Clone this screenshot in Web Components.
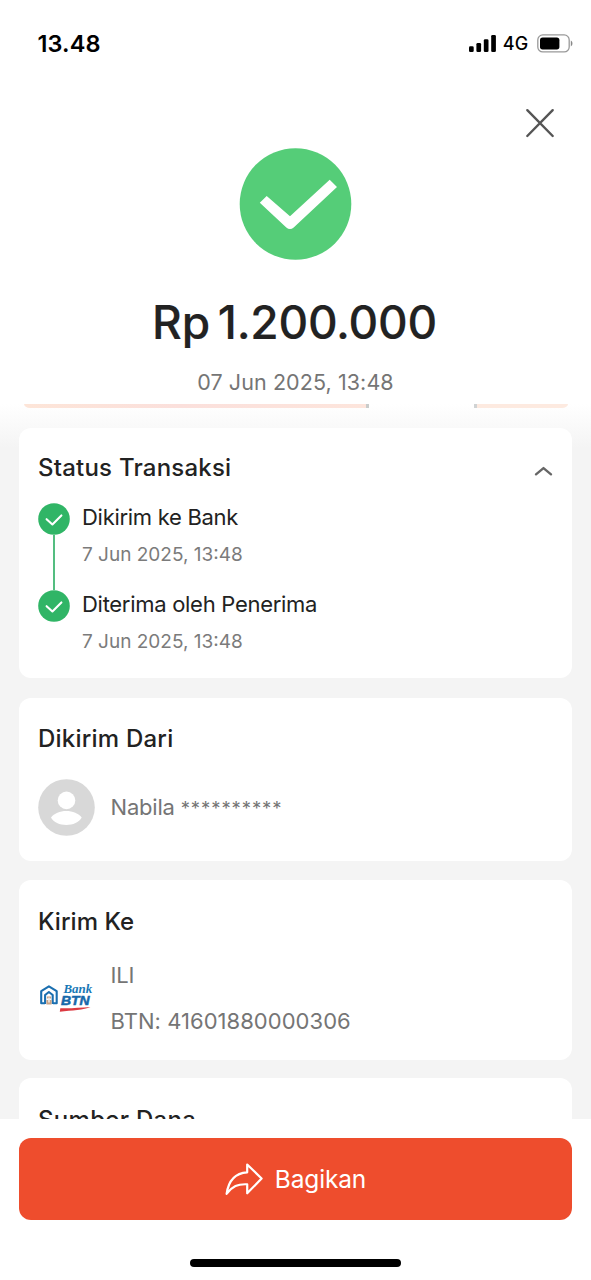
<!DOCTYPE html>
<html lang="id">
<head>
<meta charset="utf-8">
<title>Status Transaksi</title>
<style>
html,body{margin:0;padding:0;background:#fff}
body{width:591px;height:1280px;overflow:hidden;font-family:Inter,"Liberation Sans",sans-serif;color:#222}
</style>
</head>
<body>
<transfer-receipt></transfer-receipt>
<script>
const define = (name, css, html) => customElements.define(name, class extends HTMLElement {
  constructor() {
    super();
    const t = document.createElement('template');
    t.innerHTML = `<style>*{box-sizing:border-box}svg{display:block;flex:none}${css}</style>${html}`;
    this.attachShadow({ mode: 'open' }).append(t.content.cloneNode(true));
  }
});

define('status-bar', `
:host{display:flex;height:87px;padding:0 18px 0 37.5px;align-items:center;justify-content:space-between;color:#000}
.time{font-size:23.5px;font-weight:600;letter-spacing:.1px}
.right{display:flex;align-items:center}
.net{font-size:18px;font-weight:500;letter-spacing:.3px;line-height:20px;margin:1px 8.5px 0 7px}`, `
<span class="time">13.48</span>
<div class="right">
<svg width="27" height="17" viewBox="0 0 27 17"><rect y="11.3" width="4.7" height="5.7" rx="1.3"/><rect x="7.4" y="8" width="4.7" height="9" rx="1.3"/><rect x="14.8" y="4.3" width="4.7" height="12.7" rx="1.3"/><rect x="22.2" width="4.7" height="17" rx="1.3"/></svg>
<span class="net">4G</span>
<svg width="36" height="19" viewBox="0 0 36 19"><rect x=".8" y=".9" width="31.4" height="17" rx="5" fill="none" stroke="#999" stroke-width="1.3"/><rect x="3" y="3.6" width="19.4" height="11.8" rx="2.6"/><path d="M33.8 6.6c2.2.8 2.2 5 0 5.8z" fill="#888"/></svg>
</div>`);

define('receipt-header', `
:host{display:flex;flex-direction:column;height:317px;align-items:center}
.bar{height:61px;align-self:stretch;display:flex;justify-content:flex-end;padding:21px 36px 0 0}
.amount{margin-top:32px;margin-right:2px;font-size:46px;font-weight:500;line-height:60px;letter-spacing:-.25px;word-spacing:-4px;-webkit-text-stroke:.2px #222}
.date{margin-top:15px;font-size:21.5px;line-height:30px;letter-spacing:.08px;color:#757575}`, `
<div class="bar"><svg width="30" height="30" viewBox="0 0 30 30"><path d="M2.3 2.2 27.7 28M27.7 2.2 2.3 28" stroke="#555" stroke-width="2.4" stroke-linecap="round"/></svg></div>
<svg width="113" height="112" viewBox="0 0 113 112"><circle cx="56.5" cy="56" r="55.8" fill="#55cd78"/><path d="M20.8 54.8 27.7 48 51 68.3 90.7 31.700 98 39 54.700 79.500Q51 82.500 47.300 79.500Z" fill="#fff"/></svg>
<div class="amount">Rp 1.200.000</div>
<div class="date">07 Jun 2025, 13:48</div>`);

define('promo-edge', `
:host{display:flex;height:4px;margin:0 4px 0 5px;justify-content:space-between}
i{display:block;height:4px}
.a{width:345px;background:linear-gradient(90deg,#fde5d8,#fbe0dc 45%,#fde5dc);border-bottom-left-radius:6px 4px;border-right:3px solid #c9cccb}
.b{width:94px;background:#fdeae0;border-bottom-right-radius:6px 4px;border-left:3px solid #d0d3d4}`, `<i class="a"></i><i class="b"></i>`);

define('info-card', `
:host{display:block;background:#fff;border-radius:12px;padding:0 19px;flex:none}
.head{display:flex;justify-content:space-between;align-items:center;font-size:24px;font-weight:450;line-height:30px;letter-spacing:var(--title-spacing,.22px);height:30px}`, `
<div class="head"><slot name="title"></slot><slot name="action"></slot></div><slot></slot>`);

define('chevron-up', `:host{display:block;margin-top:5px}`, `
<svg width="19" height="12" viewBox="0 0 19 12"><path d="m2 9.300 7.500-6.200 7.500 6.200" fill="none" stroke="#666" stroke-width="2.4" stroke-linecap="round" stroke-linejoin="round"/></svg>`);

define('status-step', `
:host{display:flex;height:87px}
.rail{width:32px;display:flex;flex-direction:column;align-items:center}
.line{width:2px;flex:1;background:var(--line,#54bd80)}
.text{margin-left:12px}
.name{font-size:22px;line-height:28px;letter-spacing:-.29px}
.when{margin-top:10px;font-size:19px;line-height:28px;color:#7b7b7b}`, `
<div class="rail"><svg width="32" height="32" viewBox="0 0 32 32"><circle cx="16" cy="16" r="15.8" fill="#30b566"/><path d="m8.6 16.2 5.8 5.3 9-9.1" fill="none" stroke="#fff" stroke-width="2.1" stroke-linecap="round" stroke-linejoin="round"/></svg><div class="line"></div></div>
<div class="text"><div class="name"><slot></slot></div><div class="when"><slot name="when"></slot></div></div>`);

define('user-avatar', `:host{display:block;flex:none}`, `
<svg width="57" height="57" viewBox="0 0 57 57"><circle cx="28.5" cy="28.5" r="28.3" fill="#d8d8d8"/><circle cx="28.5" cy="21.4" r="8.8" fill="#fff"/><path d="M13 38.5C16 34.4 22 32 28.3 32s12.400 2.400 15.400 6.500C41 43.300 35 46 28.300 46S15.500 43.300 13 38.500Z" fill="#fff"/></svg>`);

define('bank-logo', `:host{display:block;flex:none}`, `
<svg width="57" height="57" viewBox="0 0 57 57">
<g fill="none" stroke="#1b6fb0" stroke-width="2.1" stroke-linejoin="round"><path d="M7 33.300H3.200V21.200L10.900 16.400 18.700 21.200V33.300H15"/><path d="M7.100 34V25L10.900 22 14.700 25V34"/></g>
<path d="M9 26.500h4v2H9zM8.400 30h5.200v4.400H8.400z" fill="#c9a386"/><path d="M10.200 27.500h1.600v5h-1.600z" fill="#f3ebe4"/>
<text x="25.400" y="23" textLength="28.800" lengthAdjust="spacingAndGlyphs" font-family="Liberation Serif,serif" font-style="italic" font-weight="700" font-size="13" fill="#1878b6">Bank</text>
<text x="23" y="35" textLength="28.600" lengthAdjust="spacingAndGlyphs" font-family="Liberation Sans,sans-serif" font-style="italic" font-weight="700" font-size="12.5" fill="#1668aa" stroke="#1668aa" stroke-width=".5">BTN</text>
<path d="M22.300 38.200C32 38.700 42 37.600 52.500 37 46 39.900 34 40.400 21.800 41.800Z" fill="#dc3a42"/></svg>`);

define('account-row', `
:host{display:flex;align-items:center}
.text{margin-left:15.5px;font-size:22px;line-height:28px;color:#757575;display:flex;flex-direction:column;gap:18px}`, `
<slot name="icon"></slot><div class="text"><slot></slot></div>`);

define('share-footer', `
:host{display:flex;flex-direction:column;align-items:center;height:161px;background:#fff;padding:19px 19px 0}
button{all:unset;box-sizing:border-box;width:100%;height:82px;border-radius:12px;background:#ee4d2d;color:#fff;display:flex;align-items:center;justify-content:center;gap:12px;font-size:24.5px;letter-spacing:-.15px;line-height:30px}
.home{width:211px;height:8px;margin-top:39px;border-radius:4px;background:#000}`, `
<button><svg width="38" height="34" viewBox="0 0 38 34"><path d="M22.200 2.500 36.600 16.500 22.200 31.300V22.300C12.500 21.800 7.500 24.300 1.600 31.800 3.500 18.500 10.500 11 22.200 10.300Z" fill="none" stroke="#fff" stroke-width="2.2" stroke-linejoin="round"/></svg><span>Bagikan</span></button>
<div class="home"></div>`);

define('transfer-receipt', `
:host{display:flex;flex-direction:column;height:1280px;width:591px;background:#fff}
main{height:715px;overflow:hidden;display:flex;flex-direction:column;padding:0 19px;background:linear-gradient(#fff,#f4f4f4 44px)}
.status{margin-top:20px;height:250px;padding-top:25px}
.status status-step:first-of-type{margin-top:20px}
.from{margin-top:19.5px;height:163.5px;padding-top:26.5px}
.to{margin-top:19px;height:179.5px;padding-top:26.5px;--title-spacing:.05px}
.source{margin-top:18.5px;height:180px;padding-top:27px;--title-spacing:.3px}
.from account-row{margin-top:25px}
.to account-row{margin-top:24.5px}
.name{letter-spacing:-.2px}
.from .row{margin-top:-1px}
.stars{font-size:18.5px;letter-spacing:.9px}
.num{letter-spacing:.04px}`, `
<status-bar></status-bar>
<receipt-header></receipt-header>
<main>
<promo-edge></promo-edge>
<info-card class="status"><span slot="title">Status Transaksi</span><chevron-up slot="action"></chevron-up>
<status-step>Dikirim ke Bank<span slot="when">7 Jun 2025, 13:48</span></status-step>
<status-step style="--line:transparent">Diterima oleh Penerima<span slot="when">7 Jun 2025, 13:48</span></status-step></info-card>
<info-card class="from"><span slot="title">Dikirim Dari</span>
<account-row><user-avatar slot="icon"></user-avatar><span class="row"><span class="name">Nabila </span><span class="stars">**********</span></span></account-row></info-card>
<info-card class="to"><span slot="title">Kirim Ke</span>
<account-row><bank-logo slot="icon"></bank-logo><span class="name">ILI</span><span class="num">BTN: 41601880000306</span></account-row></info-card>
<info-card class="source"><span slot="title">Sumber Dana</span></info-card>
</main>
<share-footer></share-footer>`);
</script>
</body>
</html>
